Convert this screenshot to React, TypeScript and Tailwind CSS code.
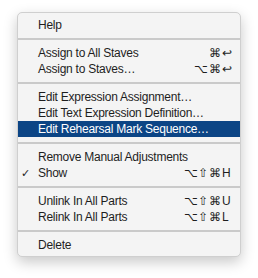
import React from "react";

type Item =
  | { type: "sep" }
  | { type: "item"; label: string; mods?: string; key?: string; check?: boolean; active?: boolean };

const items: Item[] = [
  { type: "item", label: "Help" },
  { type: "sep" },
  { type: "item", label: "Assign to All Staves", mods: "⌘", key: "↩" },
  { type: "item", label: "Assign to Staves…", mods: "⌥⌘", key: "↩" },
  { type: "sep" },
  { type: "item", label: "Edit Expression Assignment…" },
  { type: "item", label: "Edit Text Expression Definition…" },
  { type: "item", label: "Edit Rehearsal Mark Sequence…", active: true },
  { type: "sep" },
  { type: "item", label: "Remove Manual Adjustments" },
  { type: "item", label: "Show", check: true, mods: "⌥⇧⌘", key: "H" },
  { type: "sep" },
  { type: "item", label: "Unlink In All Parts", mods: "⌥⇧⌘", key: "U" },
  { type: "item", label: "Relink In All Parts", mods: "⌥⇧⌘", key: "L" },
  { type: "sep" },
  { type: "item", label: "Delete" },
];

export default function App() {
  return (
    <div
      className="w-[258px] h-[278px] bg-white pt-[12px] pl-[17px]"
      style={{ fontFamily: '"Liberation Sans", Arial, sans-serif' }}
    >
      <div className="w-[224px] bg-[#f4f4f4] border border-[#cfcfcf] rounded-[5px] pt-[4px] pb-[3px] shadow-[0_5px_14px_rgba(0,0,0,0.22)] text-[12px] leading-[16px] text-[#1e1e1e]">
        {items.map((it, i) =>
          it.type === "sep" ? (
            <div key={i} className="h-[12px] flex items-center">
              <div className="w-full h-[2px] bg-[#cacaca]" />
            </div>
          ) : (
            <div
              key={i}
              className={
                "relative flex h-[16px] items-center pl-[20px] " +
                (it.active ? "bg-[#0c4585] text-white" : "")
              }
            >
              {it.check && (
                <span className="absolute left-[3px] top-0 text-[11px]">✓</span>
              )}
              <span className="flex-1 whitespace-nowrap tracking-[-0.25px]">{it.label}</span>
              {it.key && (
                <>
                  <span className="text-right whitespace-nowrap text-[12px] tracking-[0.5px]">{it.mods}</span>
                  <span className="w-[15px] pl-[1px] whitespace-nowrap">{it.key}</span>
                </>
              )}
              <span className="w-[4px]" />
            </div>
          )
        )}
      </div>
    </div>
  );
}
